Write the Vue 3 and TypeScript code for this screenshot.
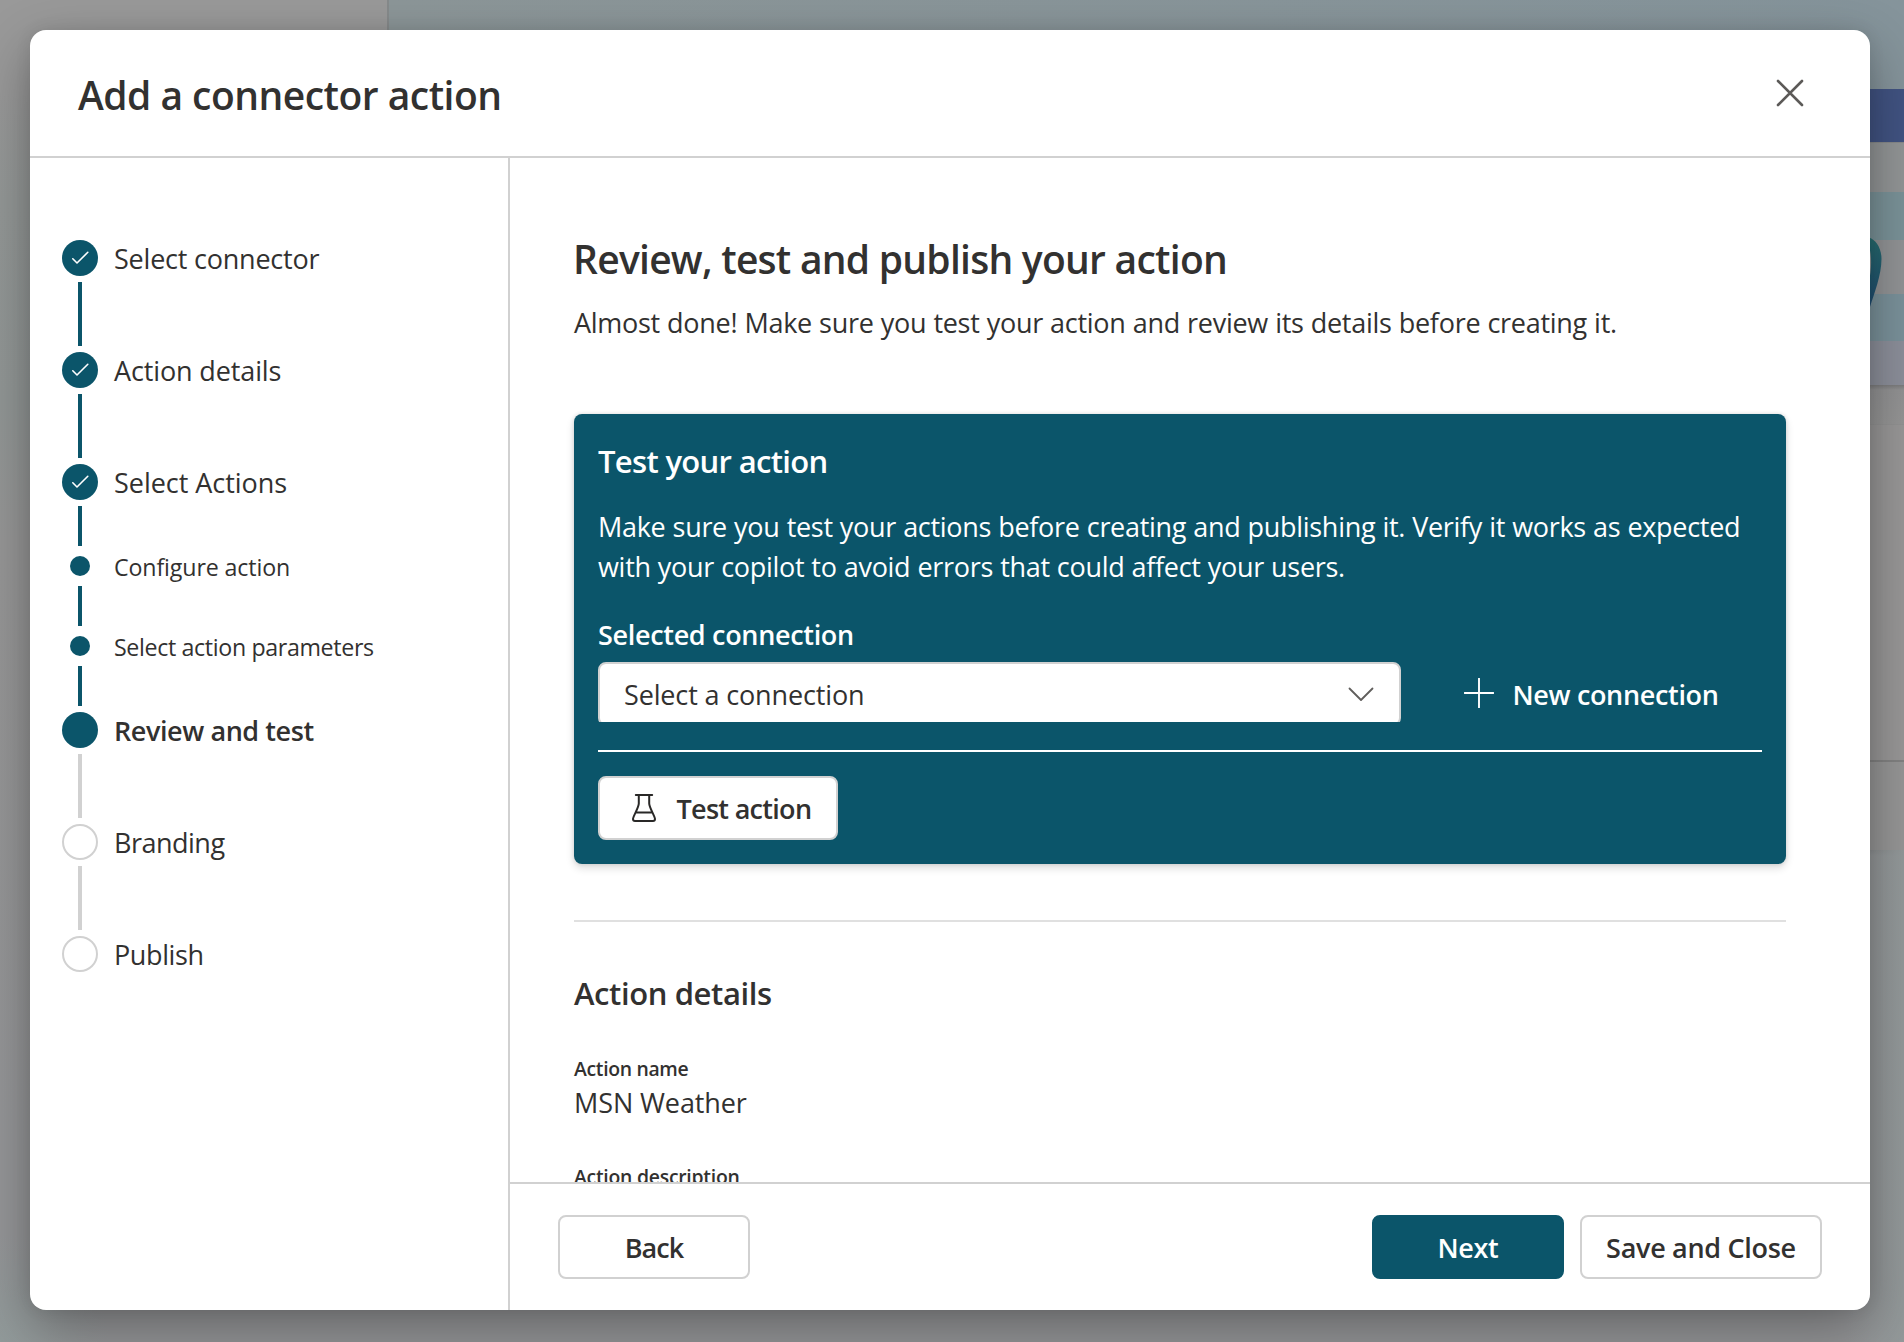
<script setup lang="ts">
type StepState = 'done' | 'current' | 'sub' | 'todo'

interface Step {
  label: string
  state: StepState
  line?: 'long' | 'short'
  spacing: string
}

const steps: Step[] = [
  { label: 'Select connector', state: 'done', line: 'long', spacing: '-0.218px' },
  { label: 'Action details', state: 'done', line: 'long', spacing: '-0.131px' },
  { label: 'Select Actions', state: 'done', line: 'short', spacing: '-0.04px' },
  { label: 'Configure action', state: 'sub', line: 'short', spacing: '-0.12px' },
  { label: 'Select action parameters', state: 'sub', line: 'short', spacing: '-0.347px' },
  { label: 'Review and test', state: 'current', line: 'long', spacing: '-0.42px' },
  { label: 'Branding', state: 'todo', line: 'long', spacing: '-0.5px' },
  { label: 'Publish', state: 'todo', spacing: '-0.386px' },
]
</script>

<template>
  <div class="screen">
    <div class="backdrop">
      <div class="page-nav"></div>
      <div class="page-main">
        <div class="band top"></div>
        <div class="band blue"></div>
        <div class="band gray1"></div>
        <div class="band teal1"></div>
        <div class="band gray2"></div>
        <div class="band teal2"></div>
        <div class="band lilac"></div>
        <div class="band panel-head"></div>
        <div class="band panel"></div>
        <div class="band panel-foot"></div>
        <div class="band rest"></div>
      </div>
      <svg class="ribbon" width="20" height="80" viewBox="0 0 20 80">
        <defs>
          <linearGradient id="rb" x1="0" y1="0" x2="0" y2="1">
            <stop offset="0" stop-color="#276d70" />
            <stop offset="1" stop-color="#1f4a70" />
          </linearGradient>
        </defs>
        <path d="M0 0.500C7 3 12.500 11 12.500 22C12.500 38 5 57 1 70L0 72V44C2 36 3.500 20 0 10Z" fill="url(#rb)" />
      </svg>
    </div>

    <div class="dialog">
      <header class="dialog-head">
        <h1>Add a connector action</h1>
        <svg class="close" width="28" height="28" viewBox="0 0 28 28">
          <path d="M2 2L26 26M26 2L2 26" stroke="#5c5a58" stroke-width="2.600" stroke-linecap="round" />
        </svg>
      </header>

      <div class="dialog-body">
        <nav class="steps">
          <template v-for="step in steps" :key="step.label">
            <div class="step" :class="step.state">
              <span class="marker">
                <span class="dot">
                  <svg v-if="step.state === 'done'" width="36" height="36" viewBox="0 0 36 36">
                    <path d="M10.800 18.800L15 23L25.800 12.300" fill="none" stroke="#fff" stroke-width="1.600" stroke-linecap="round" stroke-linejoin="round" />
                  </svg>
                </span>
              </span>
              <span class="step-label" :style="{ letterSpacing: step.spacing }">{{ step.label }}</span>
            </div>
            <div
              v-if="step.line"
              class="line"
              :class="[step.line, { pending: step.state === 'current' || step.state === 'todo' }]"
            ></div>
          </template>
        </nav>

        <section class="main">
          <div class="content">
            <h2>Review, test and publish your action</h2>
            <p class="sub">Almost done! Make sure you test your action and review its details before creating it.</p>

            <div class="card">
              <h3>Test your action</h3>
              <p class="desc">
                Make sure you test your actions before creating and publishing it. Verify it works as expected<br />with your copilot to avoid errors that could affect your users.
              </p>
              <div class="field-label">Selected connection</div>
              <div class="row">
                <div class="select">
                  <span>Select a connection</span>
                  <svg width="26" height="16" viewBox="0 0 26 16">
                    <path d="M1.500 2.500L13 14L24.500 2.500" fill="none" stroke="#605e5c" stroke-width="1.800" stroke-linecap="round" stroke-linejoin="round" />
                  </svg>
                </div>
                <div class="new-conn">
                  <svg width="30" height="30" viewBox="0 0 30 30">
                    <path d="M15 0.500V29.500M0.500 15H29.500" stroke="#fff" stroke-width="1.900" stroke-linecap="round" />
                  </svg>
                  <span>New connection</span>
                </div>
              </div>
              <div class="card-rule"></div>
              <button class="btn test">
                <svg width="24" height="28" viewBox="0 0 24 28">
                  <path d="M3.800 1H20.200M6.800 1V9.500C6.800 13.500 1 22.500 1 25C1 26.300 1.800 27 3 27H21C22.200 27 23 26.300 23 25C23 22.500 17.200 13.500 17.200 9.500V1M4.500 18.500H19.500" fill="none" stroke="#292827" stroke-width="2" stroke-linecap="round" stroke-linejoin="round" />
                </svg>
                <span>Test action</span>
              </button>
            </div>

            <div class="rule"></div>
            <h3 class="details-title">Action details</h3>
            <div class="small-label name">Action name</div>
            <div class="value">MSN Weather</div>
            <div class="small-label description">Action description</div>
          </div>

          <footer class="foot">
            <button class="btn back"><span>Back</span></button>
            <div class="foot-right">
              <button class="btn next"><span>Next</span></button>
              <button class="btn save"><span>Save and Close</span></button>
            </div>
          </footer>
        </section>
      </div>
    </div>
  </div>
</template>

<style>
body {
  overflow: hidden;
}
</style>

<style scoped>
* {
  box-sizing: border-box;
}
h1,
h2,
h3,
p {
  margin: 0;
  font-weight: 600;
}
.screen {
  position: relative;
  width: 1904px;
  height: 1342px;
  padding: 30px 34px 32px 30px;
  overflow: hidden;
  font-family: 'Open Sans', 'Noto Sans', sans-serif;
  font-size: 27px;
  color: #323130;
  white-space: nowrap;
}
.backdrop {
  position: absolute;
  inset: 0;
  display: flex;
  background: #959698;
}
.page-nav {
  width: 387px;
  background:
    radial-gradient(circle at 0 100%, #929b9b 0, #929b9b00 110px),
    linear-gradient(#999 0, #999 90px, #949897 200px, #929796 400px, #979797 540px, #959698 1150px);
}
.page-main {
  flex: 1;
  display: flex;
  flex-direction: column;
}
.top {
  height: 89px;
  border-left: 2px solid #868a8b;
  background: linear-gradient(90deg, #8c9698, #85949b);
}
.blue {
  height: 53px;
  background: #415382;
}
.gray1 {
  height: 50px;
  background: #929596;
  border-top: 1px solid #868889;
}
.teal1 {
  height: 48px;
  background: #7a9298;
}
.gray2 {
  height: 54px;
  background: #919395;
}
.teal2 {
  height: 47px;
  background: #7a919a;
}
.lilac {
  height: 44px;
  background: #8c8f9a;
}
.panel-head {
  height: 39px;
  background: linear-gradient(#7c7c7d, #929293 5px, #959595);
}
.panel {
  height: 338px;
  background: #989797;
  border-top: 1px solid #929292;
  border-bottom: 2px solid #828282;
}
.panel-foot {
  height: 88px;
  background: #969696;
}
.rest {
  flex: 1;
  background:
    linear-gradient(90deg, #93999a00 calc(100% - 60px), #93999a 100%),
    linear-gradient(#87888a, #959698 6px);
}
.ribbon {
  position: absolute;
  left: 1869px;
  top: 237px;
}
.dialog {
  position: relative;
  display: flex;
  flex-direction: column;
  width: 1840px;
  height: 1280px;
  background: #fff;
  border-radius: 16px;
  box-shadow: 0 0 16px rgba(0, 0, 0, 0.09), 0 20px 56px rgba(0, 0, 0, 0.32);
  overflow: hidden;
}
.dialog-head {
  display: flex;
  align-items: center;
  justify-content: space-between;
  height: 128px;
  padding: 0 66px 0 48px;
  border-bottom: 2px solid #d1d1d1;
}
h1 {
  padding-top: 3px;
  font-size: 39px;
  line-height: 60px;
  letter-spacing: -0.518px;
}
.dialog-body {
  display: flex;
  flex: 1;
  min-height: 0;
}
.steps {
  width: 480px;
  padding: 82px 0 0 32px;
  border-right: 2px solid #d1d1d1;
}
.step {
  display: flex;
  align-items: center;
  gap: 16px;
  height: 36px;
  line-height: 36px;
}
.marker {
  display: flex;
  justify-content: center;
  width: 36px;
}
.dot {
  display: block;
  width: 36px;
  height: 36px;
  border-radius: 50%;
  background: #0b556a;
}
.dot svg {
  display: block;
}
.step-label {
  padding-top: 2px;
}
.step.sub {
  height: 28px;
  font-size: 23.2px;
}
.sub .dot {
  width: 20px;
  height: 20px;
}
.step.current {
  font-weight: 600;
}
.todo .dot {
  background: #fff;
  border: 2px solid #d1d1d1;
}
.line {
  width: 4px;
  height: 64px;
  margin: 6px 0 6px 16px;
  background: #0b556a;
}
.line.short {
  height: 40px;
}
.line.pending {
  background: #d1d1d1;
}
.main {
  flex: 1;
  display: flex;
  flex-direction: column;
  min-width: 0;
}
.content {
  flex: 1;
  min-height: 0;
  padding: 75px 84px 0 64px;
  overflow: hidden;
}
h2 {
  margin-left: -1px;
  font-size: 39px;
  line-height: 52px;
  letter-spacing: -0.738px;
}
p.sub {
  margin-top: 18px;
  font-weight: 400;
  line-height: 40px;
  letter-spacing: -0.278px;
  word-spacing: 0.4px;
}
.card {
  height: 450px;
  margin-top: 71px;
  padding: 25px 24px 24px;
  border-radius: 8px;
  background: #0b556a;
  color: #fff;
  box-shadow: 0 0 4px rgba(0, 0, 0, 0.12), 0 4px 8px rgba(0, 0, 0, 0.14);
}
h3 {
  font-size: 31px;
  line-height: 44px;
  letter-spacing: -0.675px;
}
.desc {
  margin-top: 24px;
  font-weight: 400;
  line-height: 40px;
  letter-spacing: -0.298px;
  word-spacing: 0.4px;
}
.field-label {
  margin-top: 28px;
  font-weight: 600;
  line-height: 40px;
  letter-spacing: -0.322px;
}
.row {
  display: flex;
  align-items: center;
  margin-top: 7px;
}
.select {
  position: relative;
  display: flex;
  align-items: center;
  justify-content: space-between;
  width: 803px;
  height: 64px;
  padding: 0 25px 0 24px;
  border: 2px solid #d1d1d1;
  border-radius: 8px;
  background: #fff;
  color: #323130;
  letter-spacing: -0.144px;
}
.select::after {
  content: '';
  position: absolute;
  left: -2px;
  right: -2px;
  bottom: -3px;
  height: 5px;
  background: #0b556a;
}
.new-conn {
  display: flex;
  align-items: center;
  gap: 18.5px;
  margin-left: 63px;
  font-weight: 600;
  letter-spacing: -0.333px;
}
.new-conn svg {
  margin-top: -2px;
}
.card-rule {
  height: 2px;
  margin: 24px 0;
  background: #fff;
}
.btn {
  display: flex;
  align-items: center;
  justify-content: center;
  height: 64px;
  padding: 0;
  border: 2px solid #d1d1d1;
  border-radius: 8px;
  background: #fff;
  color: #323130;
  font: 600 27px/40px 'Open Sans', 'Noto Sans', sans-serif;
}
.btn span {
  padding-top: 2px;
}
.test {
  justify-content: flex-start;
  gap: 20.5px;
  width: 240px;
  padding-left: 32px;
  letter-spacing: -0.7px;
}
.rule {
  height: 2px;
  margin-top: 56px;
  background: #e0e0e0;
}
.details-title {
  margin-top: 49px;
  letter-spacing: -0.4px;
}
.small-label {
  font-size: 19.4px;
  font-weight: 600;
  line-height: 30px;
}
.small-label.name {
  margin-top: 39px;
  letter-spacing: -0.33px;
}
.small-label.description {
  margin-top: 40px;
  letter-spacing: -0.252px;
}
.value {
  line-height: 38px;
  letter-spacing: -0.1px;
}
.foot {
  display: flex;
  align-items: center;
  justify-content: space-between;
  height: 128px;
  padding: 0 48px;
  border-top: 2px solid #d1d1d1;
}
.foot-right {
  display: flex;
  gap: 16px;
}
.back {
  width: 192px;
  letter-spacing: -0.9px;
}
.next {
  width: 192px;
  border-color: #0b556a;
  background: #0b556a;
  color: #fff;
  letter-spacing: -0.358px;
}
.save {
  width: 242px;
  letter-spacing: -0.3px;
}
</style>
